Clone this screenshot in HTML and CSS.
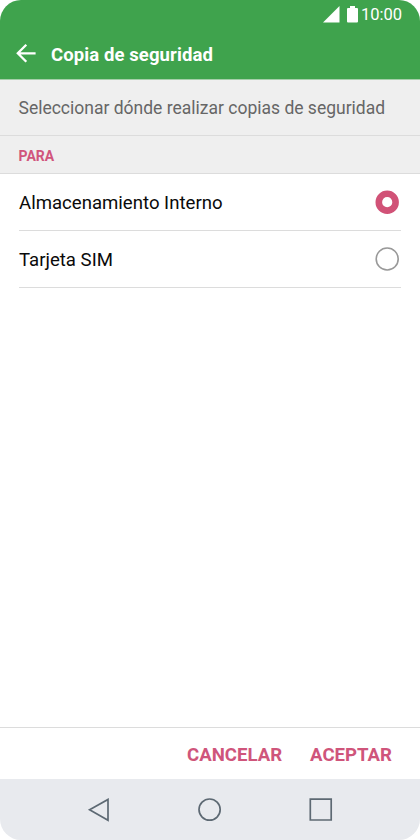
FILE: index.html
```html
<!DOCTYPE html>
<html lang="es">
<head>
<meta charset="utf-8">
<title>Copia de seguridad</title>
<link rel="stylesheet" href="styles.css">
</head>
<body>
<div class="phone">
  <header class="header">
    <div class="status">
      <svg class="signal" width="17" height="17" viewBox="0 0 17 17"><path d="M0 16.5 16.5 0V16.5Z"/></svg>
      <svg class="battery" width="11" height="17" viewBox="0 0 11 17"><path d="M3 0H8V2H10Q11 2 11 3V15.5Q11 16.5 10 16.5H1Q0 16.5 0 15.5V3Q0 2 1 2H3Z"/></svg>
      <span class="clock">10:00</span>
    </div>
    <div class="titlebar">
      <svg class="back" width="20" height="20" viewBox="0 0 20 20"><path d="M19.6 9.3H2M10.3 .8 1.8 9.3 10.3 17.8"/></svg>
      <h1 class="title">Copia de seguridad</h1>
    </div>
  </header>
  <p class="intro">Seleccionar dónde realizar copias de seguridad</p>
  <h2 class="section">PARA</h2>
  <main class="options">
    <div class="option"><span class="label">Almacenamiento Interno</span><svg class="radio checked" width="24" height="24" viewBox="0 0 24 24"><circle cx="12.2" cy="12.2" r="8.4"/></svg></div>
    <div class="option"><span class="label">Tarjeta SIM</span><svg class="radio" width="24" height="24" viewBox="0 0 24 24"><circle cx="12.2" cy="12" r="11"/></svg></div>
  </main>
  <footer class="actions"><span class="cancel">CANCELAR</span><span class="accept">ACEPTAR</span></footer>
  <nav class="nav">
    <svg width="24" height="24" viewBox="0 0 24 24"><path d="M21 1.4V22.2L2.6 11.8Z"/></svg>
    <svg width="24" height="24" viewBox="0 0 24 24"><circle cx="11.6" cy="11.6" r="10.6"/></svg>
    <svg width="24" height="24" viewBox="0 0 24 24"><path d="M1.3 1.2H22.2V22H1.3Z"/></svg>
  </nav>
</div>
</body>
</html>
```
FILE: styles.css
```css
* { box-sizing: border-box; margin: 0; padding: 0; }
body { background: #fff; font-family: Roboto, sans-serif; }
.phone {
  width: 420px; height: 840px; display: flex; flex-direction: column;
  background: #fff; border-radius: 21px; overflow: hidden;
}
.header { height: 80px; background: #3fa34d; color: #fff; border-bottom: 1px solid #a5cfaa; flex: none; }
.status { height: 28px; padding: 2px 18px 0 0; display: flex; justify-content: flex-end; align-items: center; }
.status svg { fill: #fff; }
.signal { margin-right: 7px; margin-top: -2px; }
.battery { margin-right: 3px; margin-top: -2px; }
.clock { font-size: 16.5px; line-height: 26px; }
.titlebar { height: 51px; padding-left: 16px; display: flex; align-items: center; }
.back { fill: none; stroke: #fff; stroke-width: 2.3; margin-right: 15px; }
.title { font-size: 18.5px; line-height: 24px; font-weight: 700; letter-spacing: .1px; padding-top: 2px; }
.intro {
  height: 56px; padding-left: 18.5px; line-height: 56px; font-size: 17.5px;
  color: #666; background: #efefef; border-bottom: 1px solid #dcdcdc; white-space: nowrap;
}
.section {
  height: 38px; padding-left: 18.5px; line-height: 40px; font-size: 14px;
  color: #d1557c; background: #efefef; border-bottom: 1px solid #dcdcdc;
}
.options { flex: 1; padding: 0 19px; }
.option {
  height: 57px; display: flex; align-items: center; justify-content: space-between;
  padding-right: 2px; border-bottom: 1px solid #dcdcdc; font-size: 18.6px; color: #0a0a0a;
}
.label { padding-top: 2px; }
.radio { fill: none; stroke: #999; stroke-width: 1.6; }
.radio.checked { stroke: #d15277; stroke-width: 6.6; }
.actions {
  height: 52px; border-top: 1px solid #dcdcdc; display: flex; justify-content: flex-end;
  align-items: center; gap: 28px; padding: 2px 28px 0 0; color: #cf557b; font-size: 18.6px; font-weight: 700;
}
.nav { height: 61px; background: #e8eaee; display: flex; justify-content: center; gap: 87px; align-items: center; padding-right: 1px; }
.nav svg { fill: none; stroke: #5d6973; stroke-width: 1.7; }
```
